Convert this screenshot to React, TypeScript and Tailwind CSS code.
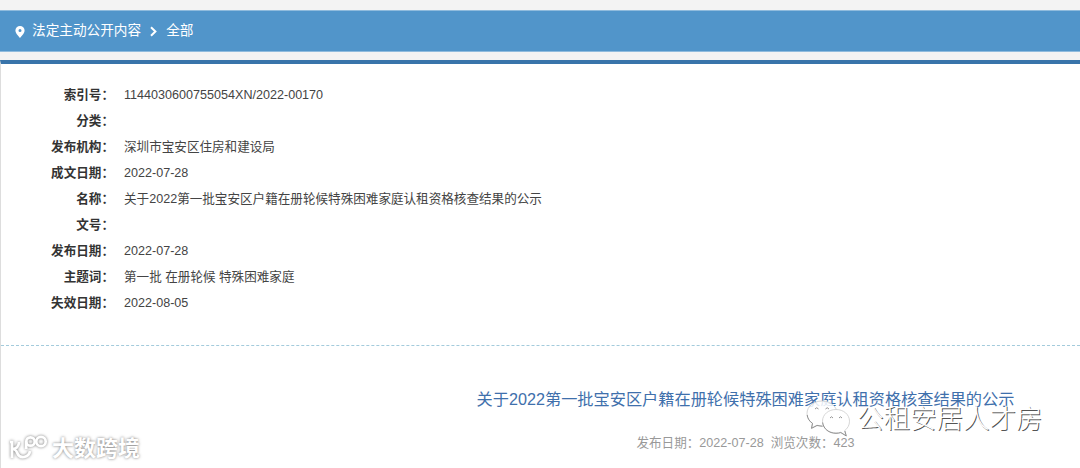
import type { ReactNode } from "react";

const INFO_ROWS: { label: string; value: string }[] = [
  { label: "索引号", value: "1144030600755054XN/2022-00170" },
  { label: "分类", value: "" },
  { label: "发布机构", value: "深圳市宝安区住房和建设局" },
  { label: "成文日期", value: "2022-07-28" },
  { label: "名称", value: "关于2022第一批宝安区户籍在册轮候特殊困难家庭认租资格核查结果的公示" },
  { label: "文号", value: "" },
  { label: "发布日期", value: "2022-07-28" },
  { label: "主题词", value: "第一批 在册轮候 特殊困难家庭" },
  { label: "失效日期", value: "2022-08-05" },
];

function Breadcrumb() {
  return (
    <nav className="flex h-[42px] items-center border-y border-[#8fbbdd] bg-[#5195ca] pl-[15px] pt-px text-[13.65px] text-white">
      <svg viewBox="0 0 10 12" className="mr-[7px] h-3 w-[10px]">
        <path
          d="M5 0A4.600 4.600 0 0 0 .4 4.600C.4 7.600 5 12 5 12s4.600-4.400 4.600-7.400A4.600 4.600 0 0 0 5 0Zm0 3a1.500 1.500 0 1 1 0 3 1.500 1.500 0 0 1 0-3Z"
          fill="currentColor"
          fillRule="evenodd"
        />
      </svg>
      <span>法定主动公开内容</span>
      <svg viewBox="0 0 7 10" className="mx-[9px] h-[11px] w-[7px]" fill="none">
        <path d="M1 .8 5.4 5 1 9.2" stroke="currentColor" strokeWidth="2" />
      </svg>
      <span>全部</span>
    </nav>
  );
}

function InfoTable() {
  return (
    <dl className="pt-[18px] text-[12.58px] leading-[26px] text-[#444]">
      {INFO_ROWS.map((row) => (
        <div key={row.label} className="flex h-[26px]">
          <dt className="w-[113px] shrink-0 text-right font-bold text-[#333]">{row.label}：</dt>
          <dd className="ml-[10px] whitespace-nowrap">{row.value}</dd>
        </div>
      ))}
    </dl>
  );
}

function Watermark({ className, children }: { className: string; children: ReactNode }) {
  return <div className={`pointer-events-none absolute flex items-center whitespace-nowrap ${className}`}>{children}</div>;
}

function WechatMark() {
  return (
    <svg viewBox="0 0 46 40" className="h-10 w-[46px]" strokeLinejoin="round">
      <g fill="#fff" stroke="#ccc" strokeWidth=".8">
        <path
          d="M17 2C8.500 2 2 7.500 2 14.500c0 4 2 7.500 5.500 9.800L6.500 29l5.500-2.800c2 .6 3.500.8 5.500.8C26 27 32 21.500 32 14.500S25.500 2 17 2Z"
          fillOpacity=".85"
        />
        <path d="M31 10.500c-7.500 0-13.500 5-13.500 11.700S23.500 34 31 34c1.700 0 3.300-.2 4.800-.7L41 36.500l-1.400-4.800c3-2.200 4.900-5.600 4.900-9.500 0-6.700-6-11.700-13.500-11.700Z" />
      </g>
      <g fill="none" stroke="#888" strokeWidth=".9">
        <path d="M10 10q1.700-2.500 3.500 0M20.500 10q1.700-2.500 3.500 0M25 19q1.500-2.500 3 0M34 19q1.500-2.500 3 0" />
        <path d="M17.600 23.500C18.500 30 24 34.300 31 34.300c1.700 0 3.300-.2 4.800-.7L41.300 37l-1.400-5" />
        <path d="M2.200 16c.4 3.500 2.300 6.400 5.300 8.400l-1 5 5.500-2.900 5.500.8" />
      </g>
    </svg>
  );
}

function BrandMark() {
  return (
    <svg
      viewBox="0 0 40 28"
      className="h-7 w-10 drop-shadow-[0_0_1.5px_rgba(90,90,90,0.8)]"
      fill="none"
      stroke="#fff"
      strokeWidth="2.700"
    >
      <path d="M2 7h2v16M4 14c4 0 7-2.500 7-7M4 14c4 0 4.500 2 5.500 4.500s3.500 4 6.500 3.500 5.500-2.500 6-6" />
      <path d="M18.200 14V6.500" />
      <circle cx="22.500" cy="6.500" r="4.200" />
      <circle cx="33" cy="6.500" r="4.700" />
    </svg>
  );
}

export default function App() {
  return (
    <div className="relative h-[468px] w-full overflow-hidden bg-[#f3f3f3] pt-[10px] font-['Liberation_Sans','Noto_Sans_CJK_SC',sans-serif]">
      <Breadcrumb />
      <main className="mt-2 h-[408px] border-l border-t-4 border-l-[#ddd] border-t-[#3974aa] bg-white">
        <InfoTable />
        <div className="mt-[29px] border-t border-dashed border-[#a3cbdc]" />
        <article className="flex flex-col items-center pl-[410px]">
          <h1 className="mt-[41px] whitespace-nowrap text-[16.2px] leading-6 text-[#3f70ac]">
            关于2022第一批宝安区户籍在册轮候特殊困难家庭认租资格核查结果的公示
          </h1>
          <p className="mt-[22px] whitespace-pre text-[12.58px] leading-5 text-[#999]">
            发布日期：2022-07-28  浏览次数：423
          </p>
        </article>
      </main>

      <Watermark className="left-[805px] top-[399px]">
        <WechatMark />
        <span className="ml-[6px] text-[26.5px] font-light leading-9 text-white [text-shadow:1px_1px_0.5px_#555]">
          公租安居人才房
        </span>
      </Watermark>
      <Watermark className="left-[8px] top-[433px]">
        <BrandMark />
        <span className="ml-1 text-[22px] font-bold leading-8 text-white [text-shadow:0_0_3px_#777]">大数跨境</span>
      </Watermark>
    </div>
  );
}
